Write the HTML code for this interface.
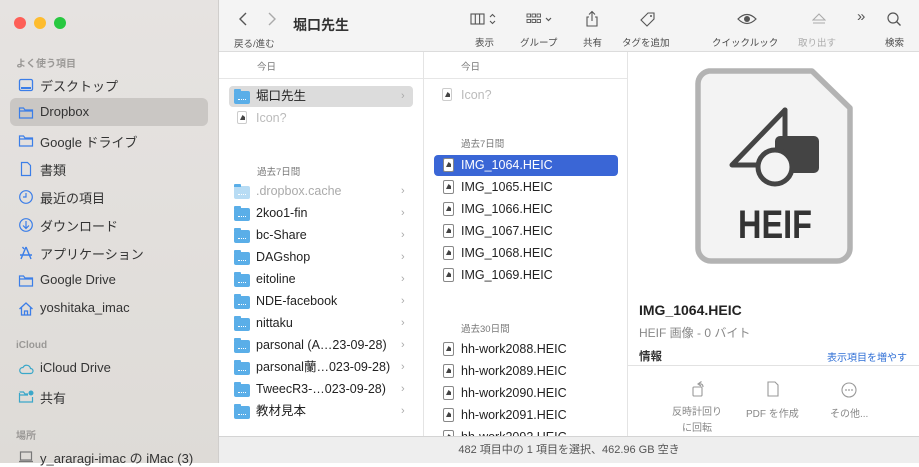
<!DOCTYPE html>
<html><head><meta charset="utf-8">
<style>
*{margin:0;padding:0;box-sizing:border-box}
body{width:919px;height:463px;overflow:hidden;font-family:"Liberation Sans","Noto Sans CJK JP",sans-serif;background:#fff;position:relative;color:#222}
.abs{position:absolute;white-space:nowrap}
#side{position:absolute;left:0;top:0;width:219px;height:463px;background:linear-gradient(180deg,#e6e3e1,#dedbd7);border-right:1px solid #d0cecc}
.dot{position:absolute;top:17px;width:12px;height:12px;border-radius:50%}
.sh{position:absolute;left:16px;font-size:10px;color:#9a9896;font-weight:bold}
.si{position:absolute;left:40px;font-size:13px;color:#333;white-space:nowrap}
.sic{position:absolute;left:18px;width:16px;height:16px}
#tb{position:absolute;left:219px;top:0;width:700px;height:52px;background:#f4f4f4;border-bottom:1px solid #dcdcdc}
.tl{position:absolute;top:35px;font-size:9.5px;color:#4a4a4a;white-space:nowrap}
.col{position:absolute;top:52px;height:384px;background:#fff;overflow:hidden}
.hd{position:absolute;font-size:9.5px;color:#777;white-space:nowrap}
.row{position:absolute;font-size:12.5px;color:#222;height:21px;line-height:21px;white-space:nowrap}
.row span{white-space:nowrap}
.fold{display:inline-block;position:absolute;width:16px;height:13px;background:#5aaee8;border-radius:2px;top:5px}
.fold:before{content:"";position:absolute;left:0;top:-2px;width:7px;height:3px;background:#5aaee8;border-radius:1px 1px 0 0}
.fold:after{content:"";position:absolute;left:4px;top:6px;width:8px;height:2px;border-bottom:1px dotted #fff}
.file{position:absolute;width:11px;height:14px;border:1px solid #888;border-radius:2px;background:#fff;top:3px}
.file:after{content:"";position:absolute;left:2px;top:3px;width:5px;height:5px;background:#444;clip-path:polygon(50% 0,100% 40%,100% 100%,0 100%)}
.chev{position:absolute;font-size:11px;color:#aaa}
#status{position:absolute;left:219px;top:436px;width:700px;height:27px;background:#eeeeee;border-top:1px solid #d4d4d4;font-size:11px;color:#555;text-align:center;line-height:26px}
</style></head><body>
<div id="side">
 <div class="dot" style="left:14px;background:#fe5f57"></div>
 <div class="dot" style="left:34px;background:#febc2e"></div>
 <div class="dot" style="left:54px;background:#28c840"></div>
 <div class="sh" style="top:55px">よく使う項目</div>
 <div style="position:absolute;left:10px;top:98px;width:198px;height:28px;background:#cac7c4;border-radius:6px"></div>
 <svg class="sic" style="top:77px" viewBox="0 0 16 16"><rect x="1.5" y="2.5" width="13" height="11" rx="1.5" fill="none" stroke="#3b7ee8" stroke-width="1.3"/><rect x="3" y="10" width="10" height="2" fill="#3b7ee8"/></svg>
 <div class="si" style="top:76px">デスクトップ</div>
 <svg class="sic" style="top:105px" viewBox="0 0 16 16"><path d="M1.5 4V13H14.5V5H7L5.5 3H1.5Z M1.5 6H14.5" fill="none" stroke="#3b7ee8" stroke-width="1.2"/></svg>
 <div class="si" style="top:104px">Dropbox</div>
 <svg class="sic" style="top:133px" viewBox="0 0 16 16"><path d="M1.5 4V13H14.5V5H7L5.5 3H1.5Z M1.5 6H14.5" fill="none" stroke="#3b7ee8" stroke-width="1.2"/></svg>
 <div class="si" style="top:132px">Google ドライブ</div>
 <svg class="sic" style="top:161px" viewBox="0 0 16 16"><path d="M3.5 1.5H9.5L12.5 4.5V14.5H3.5Z" fill="none" stroke="#3b7ee8" stroke-width="1.2"/></svg>
 <div class="si" style="top:160px">書類</div>
 <svg class="sic" style="top:189px" viewBox="0 0 16 16"><circle cx="8" cy="8" r="6.3" fill="none" stroke="#3b7ee8" stroke-width="1.2"/><path d="M8 4V8H5" fill="none" stroke="#3b7ee8" stroke-width="1.2"/></svg>
 <div class="si" style="top:188px">最近の項目</div>
 <svg class="sic" style="top:217px" viewBox="0 0 16 16"><circle cx="8" cy="8" r="6.3" fill="none" stroke="#3b7ee8" stroke-width="1.2"/><path d="M8 4V11M5 8.5L8 11.5L11 8.5" fill="none" stroke="#3b7ee8" stroke-width="1.2"/></svg>
 <div class="si" style="top:216px">ダウンロード</div>
 <svg class="sic" style="top:245px" viewBox="0 0 16 16"><path d="M8 2L3 14M8 2L13 14M2 10H14M6 4L4.5 2" fill="none" stroke="#3b7ee8" stroke-width="1.4"/></svg>
 <div class="si" style="top:244px">アプリケーション</div>
 <svg class="sic" style="top:273px" viewBox="0 0 16 16"><path d="M1.5 4V13H14.5V5H7L5.5 3H1.5Z M1.5 6H14.5" fill="none" stroke="#3b7ee8" stroke-width="1.2"/></svg>
 <div class="si" style="top:272px">Google Drive</div>
 <svg class="sic" style="top:301px" viewBox="0 0 16 16"><path d="M1.5 8L8 2L14.5 8M3.5 6.5V14H12.5V6.5M6.5 14V10H9.5V14" fill="none" stroke="#3b7ee8" stroke-width="1.3"/></svg>
 <div class="si" style="top:300px">yoshitaka_imac</div>
 <div class="sh" style="top:340px">iCloud</div>
 <svg class="sic" style="top:361px" viewBox="0 0 16 16"><path d="M4.5 12.5H12.5A2.5 2.5 0 0 0 12.5 7.5A4 4 0 0 0 5 6.5A3 3 0 0 0 4.5 12.5Z" fill="none" stroke="#3aa7c9" stroke-width="1.2"/></svg>
 <div class="si" style="top:360px">iCloud Drive</div>
 <svg class="sic" style="top:389px" viewBox="0 0 16 16"><path d="M1.5 4V13H14.5V8M10 5H7L5.5 3H1.5 M1.5 6H10" fill="none" stroke="#3aa7c9" stroke-width="1.2"/><circle cx="13" cy="4" r="2.5" fill="#3aa7c9"/></svg>
 <div class="si" style="top:388px">共有</div>
 <div class="sh" style="top:427px">場所</div>
 <svg class="sic" style="top:449px" viewBox="0 0 16 16"><rect x="2.5" y="3" width="11" height="8" fill="none" stroke="#777" stroke-width="1.2"/><path d="M1 12.5H15" stroke="#777" stroke-width="1.3"/></svg>
 <div class="si" style="top:448px">y_araragi-imac の iMac (3)</div>
</div>

<div id="tb">
 <svg class="abs" style="left:18px;top:11px" width="40" height="16" viewBox="0 0 40 16"><path d="M9 2L3 8L9 14" fill="none" stroke="#555" stroke-width="1.4"/><path d="M32 2L38 8L32 14" fill="none" stroke="#aaa" stroke-width="1.4"/></svg>
 <div class="abs" style="left:15px;top:36px;font-size:9.5px;color:#555">戻る/進む</div>
 <div class="abs" style="left:74px;top:15px;font-size:14px;font-weight:bold;color:#333">堀口先生</div>
 <svg class="abs" style="left:251px;top:11px" width="34" height="16" viewBox="0 0 34 16"><rect x="1" y="3" width="13" height="10" fill="none" stroke="#555" stroke-width="1.1"/><path d="M5.3 3V13M9.6 3V13" stroke="#555" stroke-width="1.1"/><path d="M20 6L22.5 3.5L25 6M20 10L22.5 12.5L25 10" fill="none" stroke="#555" stroke-width="1.1"/></svg>
 <div class="tl" style="left:256px">表示</div>
 <svg class="abs" style="left:307px;top:11px" width="30" height="16" viewBox="0 0 30 16"><g fill="none" stroke="#555" stroke-width="0.9"><rect x="1" y="3" width="3.5" height="3"/><rect x="6" y="3" width="3.5" height="3"/><rect x="11" y="3" width="3.5" height="3"/><rect x="1" y="8.5" width="3.5" height="3"/><rect x="6" y="8.5" width="3.5" height="3"/><rect x="11" y="8.5" width="3.5" height="3"/><path d="M20 7L22.5 9.5L25 7" stroke-width="1.2"/></g></svg>
 <div class="tl" style="left:301px">グループ</div>
 <svg class="abs" style="left:365px;top:10px" width="16" height="18" viewBox="0 0 16 18"><path d="M5 7H3V16H13V7H11M8 11V1.5M5 4.5L8 1.5L11 4.5" fill="none" stroke="#555" stroke-width="1.1"/></svg>
 <div class="tl" style="left:364px">共有</div>
 <svg class="abs" style="left:420px;top:10px" width="18" height="18" viewBox="0 0 18 18"><path d="M2 10L9 3H15V9L8 16Z" fill="none" stroke="#555" stroke-width="1.1"/><circle cx="12" cy="6" r="1" fill="#555"/></svg>
 <div class="tl" style="left:403px">タグを追加</div>
 <svg class="abs" style="left:518px;top:12px" width="20" height="14" viewBox="0 0 20 14"><path d="M1 7Q10 -2 19 7Q10 16 1 7Z" fill="none" stroke="#555" stroke-width="1.2"/><circle cx="10" cy="7" r="3" fill="#555"/></svg>
 <div class="tl" style="left:493px">クイックルック</div>
 <svg class="abs" style="left:593px;top:12px" width="14" height="14" viewBox="0 0 14 14"><path d="M1 8L7 2L13 8Z M1 11H13" fill="none" stroke="#aaa" stroke-width="1.1"/></svg>
 <div class="tl" style="left:579px;color:#aaa">取り出す</div>
 <div class="abs" style="left:638px;top:8px;font-size:15px;color:#555">»</div>
 <svg class="abs" style="left:667px;top:11px" width="16" height="16" viewBox="0 0 16 16"><circle cx="7" cy="7" r="5" fill="none" stroke="#555" stroke-width="1.2"/><path d="M10.5 10.5L14.5 14.5" stroke="#555" stroke-width="1.3"/></svg>
 <div class="tl" style="left:666px">検索</div>
</div>

<!-- column 1 -->
<div class="col" style="left:219px;width:205px;border-right:1px solid #e4e4e4">
 <div style="position:absolute;left:0;top:26px;width:205px;border-top:1px solid #e6e6e6"></div>
 <div class="hd" style="left:38px;top:7px">今日</div>
 <div style="position:absolute;left:10px;top:34px;width:184px;height:21px;background:#dcdcdc;border-radius:4px"></div>
 <div class="row" style="left:15px;top:34px;width:180px"><span class="fold" style="left:0"></span><span style="position:absolute;left:22px">堀口先生</span><span class="chev" style="left:167px">›</span></div>
 <div class="row" style="left:15px;top:56px;color:#bbb"><span class="file" style="left:3px;border-color:#ccc;height:13px;width:10px"></span><span style="position:absolute;left:22px">Icon?</span></div>
 <div class="hd" style="left:38px;top:112px">過去7日間</div>
 <div class="row" style="left:15px;top:129px;width:180px;color:#aaa"><span class="fold" style="left:0;background:#b8dcf4"></span><span style="position:absolute;left:22px">.dropbox.cache</span><span class="chev" style="left:167px">›</span></div>
 <div class="row" style="left:15px;top:151px;width:180px"><span class="fold" style="left:0"></span><span style="position:absolute;left:22px">2koo1-fin</span><span class="chev" style="left:167px">›</span></div>
 <div class="row" style="left:15px;top:173px;width:180px"><span class="fold" style="left:0"></span><span style="position:absolute;left:22px">bc-Share</span><span class="chev" style="left:167px">›</span></div>
 <div class="row" style="left:15px;top:195px;width:180px"><span class="fold" style="left:0"></span><span style="position:absolute;left:22px">DAGshop</span><span class="chev" style="left:167px">›</span></div>
 <div class="row" style="left:15px;top:217px;width:180px"><span class="fold" style="left:0"></span><span style="position:absolute;left:22px">eitoline</span><span class="chev" style="left:167px">›</span></div>
 <div class="row" style="left:15px;top:239px;width:180px"><span class="fold" style="left:0"></span><span style="position:absolute;left:22px">NDE-facebook</span><span class="chev" style="left:167px">›</span></div>
 <div class="row" style="left:15px;top:261px;width:180px"><span class="fold" style="left:0"></span><span style="position:absolute;left:22px">nittaku</span><span class="chev" style="left:167px">›</span></div>
 <div class="row" style="left:15px;top:283px;width:180px"><span class="fold" style="left:0"></span><span style="position:absolute;left:22px">parsonal (A…23-09-28)</span><span class="chev" style="left:167px">›</span></div>
 <div class="row" style="left:15px;top:305px;width:180px"><span class="fold" style="left:0"></span><span style="position:absolute;left:22px">parsonal蘭…023-09-28)</span><span class="chev" style="left:167px">›</span></div>
 <div class="row" style="left:15px;top:327px;width:180px"><span class="fold" style="left:0"></span><span style="position:absolute;left:22px">TweecR3-…023-09-28)</span><span class="chev" style="left:167px">›</span></div>
 <div class="row" style="left:15px;top:349px;width:180px"><span class="fold" style="left:0"></span><span style="position:absolute;left:22px">教材見本</span><span class="chev" style="left:167px">›</span></div>
</div>

<!-- column 2 -->
<div class="col" style="left:424px;width:204px;border-right:1px solid #e4e4e4">
 <div style="position:absolute;left:0;top:26px;width:204px;border-top:1px solid #e6e6e6"></div>
 <div class="hd" style="left:37px;top:7px">今日</div>
 <div class="row" style="left:14px;top:33px;color:#bbb"><span class="file" style="left:4px;border-color:#ccc;height:13px;width:10px"></span><span style="position:absolute;left:23px">Icon?</span></div>
 <div class="hd" style="left:37px;top:84px">過去7日間</div>
 <div style="position:absolute;left:10px;top:103px;width:184px;height:21px;background:#3a66d6;border-radius:4px"></div>
 <div class="row" style="left:14px;top:103px;color:#fff"><span class="file" style="left:5px"></span><span style="position:absolute;left:23px">IMG_1064.HEIC</span></div>
 <div class="row" style="left:14px;top:125px"><span class="file" style="left:5px"></span><span style="position:absolute;left:23px">IMG_1065.HEIC</span></div>
 <div class="row" style="left:14px;top:147px"><span class="file" style="left:5px"></span><span style="position:absolute;left:23px">IMG_1066.HEIC</span></div>
 <div class="row" style="left:14px;top:169px"><span class="file" style="left:5px"></span><span style="position:absolute;left:23px">IMG_1067.HEIC</span></div>
 <div class="row" style="left:14px;top:191px"><span class="file" style="left:5px"></span><span style="position:absolute;left:23px">IMG_1068.HEIC</span></div>
 <div class="row" style="left:14px;top:213px"><span class="file" style="left:5px"></span><span style="position:absolute;left:23px">IMG_1069.HEIC</span></div>
 <div class="hd" style="left:37px;top:269px">過去30日間</div>
 <div class="row" style="left:14px;top:287px"><span class="file" style="left:5px"></span><span style="position:absolute;left:23px">hh-work2088.HEIC</span></div>
 <div class="row" style="left:14px;top:309px"><span class="file" style="left:5px"></span><span style="position:absolute;left:23px">hh-work2089.HEIC</span></div>
 <div class="row" style="left:14px;top:331px"><span class="file" style="left:5px"></span><span style="position:absolute;left:23px">hh-work2090.HEIC</span></div>
 <div class="row" style="left:14px;top:353px"><span class="file" style="left:5px"></span><span style="position:absolute;left:23px">hh-work2091.HEIC</span></div>
 <div class="row" style="left:14px;top:375px"><span class="file" style="left:5px"></span><span style="position:absolute;left:23px">hh-work2092.HEIC</span></div>
</div>

<!-- preview -->
<div class="col" style="left:628px;width:291px">
 <svg class="abs" style="left:67px;top:16px" width="158" height="196" viewBox="0 0 158 196">
  <path d="M14 3H117L155 40V180A13 13 0 0 1 142 193H16A13 13 0 0 1 3 180V16A13 13 0 0 1 14 3Z" fill="#f3f3f3" stroke="#b3b3b3" stroke-width="5.5" stroke-linejoin="round"/>
  <path d="M90 42L37 97H72" fill="none" stroke="#444" stroke-width="5" stroke-linejoin="round" stroke-linecap="round"/>
  <path d="M90 42V80" stroke="#444" stroke-width="5" stroke-linecap="round"/>
  <rect x="80" y="68" width="44" height="37" rx="5" fill="#444"/>
  <circle cx="80" cy="99" r="17" fill="#f3f3f3" stroke="#444" stroke-width="5"/>
  <text x="80" y="170" text-anchor="middle" font-family="Liberation Sans Narrow,Liberation Sans,sans-serif" font-weight="bold" font-size="40" fill="#333" textLength="74" lengthAdjust="spacingAndGlyphs">HEIF</text>
 </svg>
 <div class="abs" style="left:11px;top:250px;font-size:14px;font-weight:bold;color:#222">IMG_1064.HEIC</div>
 <div class="abs" style="left:11px;top:272px;font-size:12px;color:#888">HEIF 画像 - 0 バイト</div>
 <div class="abs" style="left:11px;top:296px;font-size:11.5px;font-weight:bold;color:#333">情報</div>
 <div class="abs" style="left:199px;top:297px;font-size:10px;color:#2f6fd6">表示項目を増やす</div>
 <div style="position:absolute;left:0;top:313px;width:291px;border-top:1px solid #e2e2e2"></div>
 <svg class="abs" style="left:63px;top:328px" width="16" height="18" viewBox="0 0 16 18"><rect x="2" y="7" width="9" height="9" rx="1" fill="none" stroke="#999" stroke-width="1.1"/><path d="M7 4Q12 3 12 7M10.5 1.5L7 4L10 6" fill="none" stroke="#999" stroke-width="1.1"/></svg>
 <div class="abs" style="left:44px;top:353px;font-size:10px;color:#888;text-align:center;line-height:16px">反時計回り<br>に回転</div>
 <svg class="abs" style="left:138px;top:328px" width="14" height="18" viewBox="0 0 14 18"><path d="M2 2H9L12 5V16H2Z" fill="none" stroke="#999" stroke-width="1.1"/></svg>
 <div class="abs" style="left:118px;top:353px;font-size:10px;color:#888">PDF を作成</div>
 <svg class="abs" style="left:213px;top:330px" width="16" height="16" viewBox="0 0 16 16"><circle cx="8" cy="8" r="7" fill="none" stroke="#999" stroke-width="1.1"/><circle cx="5" cy="8" r="0.9" fill="#999"/><circle cx="8" cy="8" r="0.9" fill="#999"/><circle cx="11" cy="8" r="0.9" fill="#999"/></svg>
 <div class="abs" style="left:202px;top:353px;font-size:10px;color:#888">その他...</div>
</div>

<div id="status">482 項目中の 1 項目を選択、462.96 GB 空き</div>
</body></html>
